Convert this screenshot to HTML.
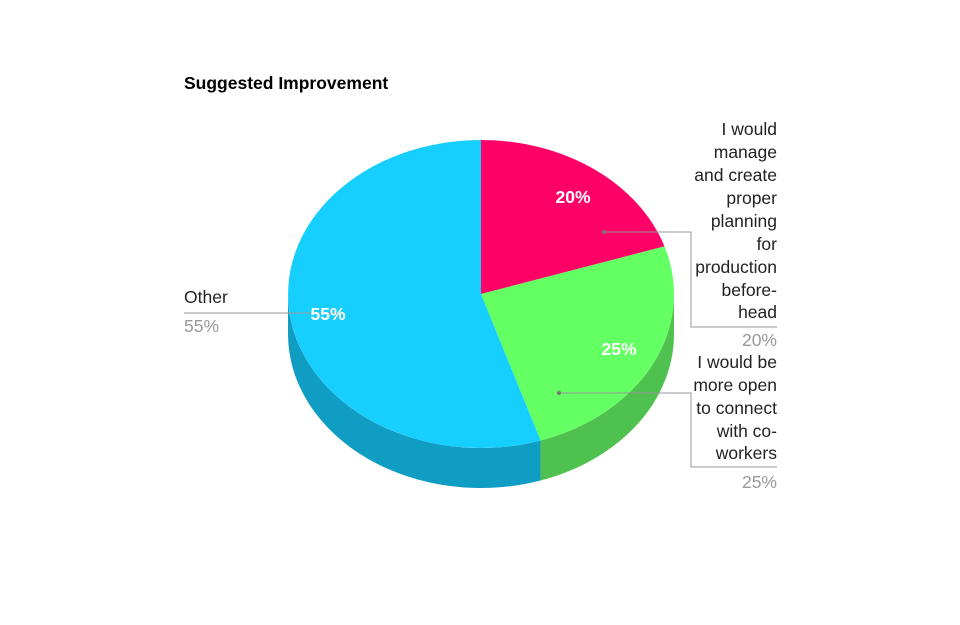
<!DOCTYPE html>
<html><head><meta charset="utf-8"><style>
html,body{margin:0;padding:0;background:#fff;}
svg{display:block;}
text{font-family:"Liberation Sans",Arial,sans-serif;}
</style></head><body>
<svg width="960" height="625" viewBox="0 0 960 625" xmlns="http://www.w3.org/2000/svg">
<rect width="960" height="625" fill="#fff"/>
<text x="184" y="89" font-size="17.5" font-weight="bold" fill="#000">Suggested Improvement</text>
<path d="M288,294 L288,334 A193,154 0 0 0 540.6,480.5 L540.6,440.5 A193,154 0 0 1 288,294 Z" fill="#109dc3"/>
<path d="M540.6,440.5 L540.6,480.5 A193,154 0 0 0 674,334 L674,294 A193,154 0 0 1 540.6,440.5 Z" fill="#4fc14f"/>
<path d="M481,294 L481,140 A193,154 0 0 1 664.5,246.4 Z" fill="#ff0066"/>
<path d="M481,294 L664.5,246.4 A193,154 0 0 1 540.6,440.5 Z" fill="#63ff63"/>
<path d="M481,294 L540.6,440.5 A193,154 0 1 1 481,140 Z" fill="#17cfff"/>
<g stroke="#999" stroke-width="1" fill="none">
<polyline points="604,232 691,232 691,327 777,327"/>
<polyline points="559,393 691,393 691,467 777,467"/>
<polyline points="184,313 345,313"/>
</g>
<g font-size="17.5" font-weight="bold" fill="#fff" text-anchor="middle">
<text x="573" y="203">20%</text>
<text x="619" y="355">25%</text>
<text x="328" y="320">55%</text>
</g>
<circle cx="604" cy="232" r="2" fill="#777"/>
<circle cx="559" cy="393" r="2" fill="#777"/>
<g font-size="17.5" fill="#222" text-anchor="end">
<text x="777" y="135">I would</text>
<text x="777" y="158">manage</text>
<text x="777" y="181">and create</text>
<text x="777" y="204">proper</text>
<text x="777" y="227">planning</text>
<text x="777" y="250">for</text>
<text x="777" y="273">production</text>
<text x="777" y="296">before-</text>
<text x="777" y="318">head</text>
<text x="777" y="368">I would be</text>
<text x="777" y="391">more open</text>
<text x="777" y="414">to connect</text>
<text x="777" y="437">with co-</text>
<text x="777" y="459">workers</text>
</g>
<g font-size="17.5" fill="#999" text-anchor="end">
<text x="777" y="346">20%</text>
<text x="777" y="488">25%</text>
</g>
<text x="184" y="303" font-size="17.5" fill="#222">Other</text>
<text x="184" y="332" font-size="17.5" fill="#999">55%</text>
</svg>
</body></html>
